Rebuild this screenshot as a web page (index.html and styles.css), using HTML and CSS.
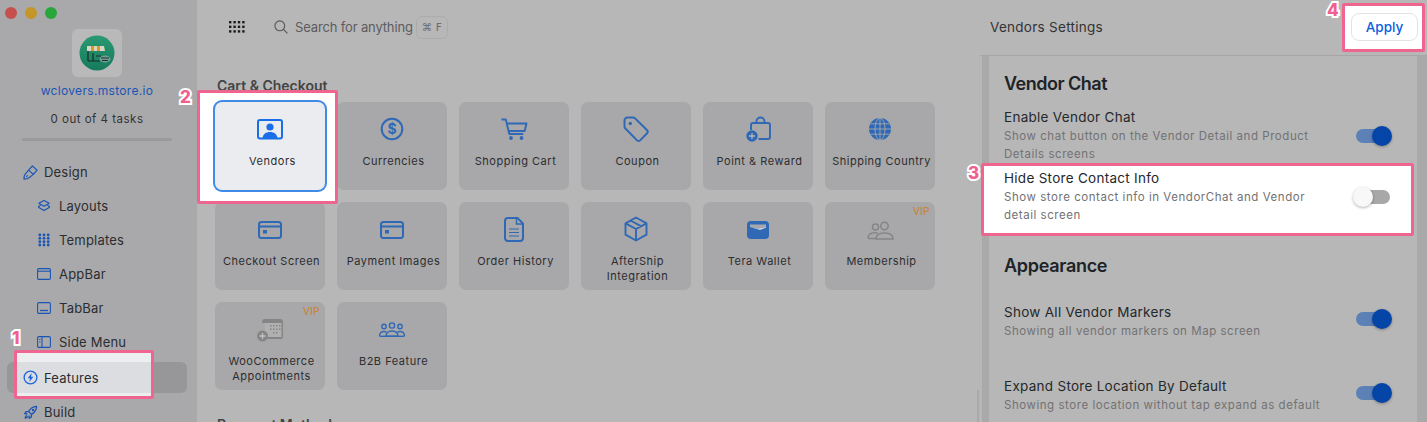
FILE: index.html
```html
<!DOCTYPE html>
<html lang="en">
<head>
<meta charset="utf-8">
<title>Vendors Settings</title>
<link rel="stylesheet" href="styles.css">
</head>
<body>
<div class="app">
  <aside class="sidebar">
    <div class="traffic"><i class="light red"></i><i class="light yellow"></i><i class="light green"></i></div>
    <div class="logo">
      <svg width="36" height="36" viewBox="0 0 36 36">
        <defs><linearGradient id="lg" x1="0" y1="0" x2="0" y2="1"><stop offset="0" stop-color="#2a9a72"/><stop offset="1" stop-color="#157a5c"/></linearGradient></defs>
        <circle cx="18" cy="18" r="17.5" fill="url(#lg)"/>
        <path d="M8 11h17l1 5H8z" fill="#d9d4c4"/>
        <path d="M12 11h3v5h-3zM18 11h3v5h-3z" fill="#d89a22"/>
        <path d="M9 16v10M14 18v8M9 26h12M17 21h5" stroke="#1c2a26" stroke-width="1.2" fill="none"/>
        <ellipse cx="26" cy="24" rx="5.5" ry="3.6" fill="#6f9e94"/>
        <path d="M22 23h8M23 25.500h6" stroke="#20302c" stroke-width="1"/>
      </svg>
    </div>
    <div class="site">wclovers.mstore.io</div>
    <div class="tasks">0 out of 4 tasks</div>
    <div class="progress"></div>
    <nav class="nav">
      <a class="nav-row">
        <svg class="nav-icon" viewBox="0 0 16 16"><path d="M10 1l5 4.500-4 4.500-5-4.500zM6 5.500L2.500 9.500C1.500 10.700 1 12.500 1 15c2.500 0 4.500-.5 5.500-1.500L11 10M3.500 12.500l1.500-1.500" fill="none" stroke="#1b55b4" stroke-width="1.300" stroke-linejoin="round"/></svg>
        <span>Design</span>
      </a>
      <a class="nav-row sub">
        <svg class="nav-icon" viewBox="0 0 14 14"><path d="M7 1.500l5.200 2.800L7 7.200 1.800 4.300zM3.500 6.300L1.800 7.500c-.4.300-.4.700 0 1L7 11.500l5.200-3c.4-.3.4-.7 0-1l-1.700-1.200" fill="none" stroke="#1b55b4" stroke-width="1.300" stroke-linejoin="round"/></svg>
        <span>Layouts</span>
      </a>
      <a class="nav-row sub">
        <svg class="nav-icon" viewBox="0 0 14 14"><g fill="#1b55b4"><circle cx="2.800" cy="2" r="1.400"/><circle cx="7" cy="2" r="1.400"/><circle cx="11.200" cy="2" r="1.400"/><circle cx="2.800" cy="5.300" r="1.400"/><circle cx="7" cy="5.300" r="1.400"/><circle cx="11.200" cy="5.300" r="1.400"/><circle cx="2.800" cy="8.700" r="1.400"/><circle cx="7" cy="8.700" r="1.400"/><circle cx="11.200" cy="8.700" r="1.400"/><circle cx="2.800" cy="12" r="1.400"/><circle cx="7" cy="12" r="1.400"/><circle cx="11.200" cy="12" r="1.400"/></g></svg>
        <span>Templates</span>
      </a>
      <a class="nav-row sub">
        <svg class="nav-icon" viewBox="0 0 14 14"><rect x=".6" y="1.600" width="12.800" height="10.800" rx="1.200" fill="none" stroke="#1b55b4" stroke-width="1.100"/><path d="M.6 4.200h12.800" stroke="#1b55b4" stroke-width="1.100"/></svg>
        <span>AppBar</span>
      </a>
      <a class="nav-row sub">
        <svg class="nav-icon" viewBox="0 0 14 14"><rect x=".6" y="1.600" width="12.800" height="10.800" rx="1.200" fill="none" stroke="#1b55b4" stroke-width="1.100"/><path d="M3 9.500h8" stroke="#1b55b4" stroke-width="1.300"/></svg>
        <span>TabBar</span>
      </a>
      <a class="nav-row sub">
        <svg class="nav-icon" viewBox="0 0 14 14"><rect x=".6" y="1.600" width="12.800" height="10.800" rx="1.200" fill="none" stroke="#1b55b4" stroke-width="1.100"/><path d="M5 1.600v10.800M2.200 4.500h1.300M2.200 7h1.300" stroke="#1b55b4" stroke-width="1.100"/></svg>
        <span>Side Menu</span>
      </a>
      <a class="nav-row active">
        <svg class="nav-icon" viewBox="0 0 16 16"><circle cx="8" cy="8" r="6.800" fill="none" stroke="#1d63e0" stroke-width="1.400"/><path d="M9.300 3.300L4.900 8.900h2.600L6.700 12.700l4.400-5.600H8.500z" fill="#1d63e0"/></svg>
        <span>Features</span>
      </a>
      <a class="nav-row build">
        <svg class="nav-icon" viewBox="0 0 16 16"><path d="M14.500 1.500c-4 .2-6.500 1.800-8.500 5.500L9 10c3.700-2 5.300-4.500 5.500-8.500zM6 7H3.300L1.800 9.300l3 .3M9 10v2.700l-2.300 1.500-.3-3M4 11c-1 .5-1.500 1.500-1.700 3 1.500-.2 2.500-.7 3-1.700" fill="none" stroke="#1b55b4" stroke-width="1.400" stroke-linejoin="round"/><circle cx="10.700" cy="5.300" r="1.300" fill="#1b55b4"/></svg>
        <span>Build</span>
      </a>
    </nav>
  </aside>

  <main class="main">
    <div class="topbar">
      <svg class="apps" width="16" height="12" viewBox="0 0 16 12"><g fill="#1c1c1c"><rect x="0" y="0" width="2.400" height="2.400"/><rect x="4.400" y="0" width="2.400" height="2.400"/><rect x="8.800" y="0" width="2.400" height="2.400"/><rect x="13.200" y="0" width="2.400" height="2.400"/><rect x="0" y="4.600" width="2.400" height="2.400"/><rect x="4.400" y="4.600" width="2.400" height="2.400"/><rect x="8.800" y="4.600" width="2.400" height="2.400"/><rect x="13.200" y="4.600" width="2.400" height="2.400"/><rect x="0" y="9.200" width="2.400" height="2.400"/><rect x="4.400" y="9.200" width="2.400" height="2.400"/><rect x="8.800" y="9.200" width="2.400" height="2.400"/><rect x="13.200" y="9.200" width="2.400" height="2.400"/></g></svg>
      <svg class="search-icon" width="14" height="14" viewBox="0 0 14 14"><circle cx="5.800" cy="5.800" r="4.900" fill="none" stroke="#555" stroke-width="1.100"/><path d="M9.400 9.400l4 4" stroke="#555" stroke-width="1.200"/></svg>
      <span class="search-text">Search for anything</span>
      <span class="kbd">⌘ F</span>
    </div>

    <section class="section">
      <h2 class="section-title">Cart &amp; Checkout</h2>
      <div class="grid">
        <div class="card selected">
          <svg class="card-icon" viewBox="0 0 28 28"><rect x="2" y="5" width="24" height="18.500" rx="2" fill="none" stroke="#1a6ee8" stroke-width="2"/><circle cx="14" cy="12" r="3.600" fill="#1a6ee8"/><path d="M6.500 23.500c.4-4.500 3.500-6.500 7.500-6.500s7.100 2 7.500 6.500z" fill="#1a6ee8"/></svg>
          <span class="card-label">Vendors</span>
        </div>
        <div class="card">
          <svg class="card-icon" viewBox="0 0 28 28"><circle cx="14" cy="14" r="10.300" fill="none" stroke="#2f68b5" stroke-width="2"/><text x="14" y="19" text-anchor="middle" class="dollar">$</text></svg>
          <span class="card-label">Currencies</span>
        </div>
        <div class="card">
          <svg class="card-icon" viewBox="0 0 28 28"><path d="M1.500 4.500h4.300l3.500 14.500h14M6.800 8.500H26.500l-1.800 7.500H8.500" fill="none" stroke="#2f68b5" stroke-width="1.900" stroke-linejoin="round"/><circle cx="11" cy="23" r="1.900" fill="#2f68b5"/><circle cx="21.500" cy="23" r="1.900" fill="#2f68b5"/></svg>
          <span class="card-label">Shopping Cart</span>
        </div>
        <div class="card">
          <svg class="card-icon" viewBox="0 0 28 28"><path d="M2.500 5.500a3 3 0 0 1 3-3h5.500a3 3 0 0 1 2.100.9L24.900 15a2.500 2.500 0 0 1 0 3.500l-6.600 6.600a2.500 2.500 0 0 1-3.500 0L3.400 13.500a3 3 0 0 1-.9-2.100z" fill="none" stroke="#2f68b5" stroke-width="2"/><circle cx="8.300" cy="8.500" r="1.700" fill="#2f68b5"/></svg>
          <span class="card-label">Coupon</span>
        </div>
        <div class="card">
          <svg class="card-icon" viewBox="0 0 28 28"><path d="M7 15V10a2 2 0 0 1 2-2h15a2 2 0 0 1 2 2v12a2 2 0 0 1-2 2H14.500M12.500 8V6.500a4 4 0 0 1 8 0V8" fill="none" stroke="#2f68b5" stroke-width="1.900"/><circle cx="8" cy="21" r="5.700" fill="#2f68b5"/><path d="M8 18v6M5 21h6" stroke="#b6b6b8" stroke-width="1.300"/></svg>
          <span class="card-label">Point &amp; Reward</span>
        </div>
        <div class="card">
          <svg class="card-icon" viewBox="0 0 28 28"><circle cx="14" cy="14" r="11" fill="#2f68b5"/><g fill="none" stroke="#a8a8aa" stroke-width=".9"><ellipse cx="14" cy="14" rx="5" ry="11"/><path d="M14 3v22M3 14h22M4.500 8.800h19M4.500 19.200h19"/></g></svg>
          <span class="card-label">Shipping Country</span>
        </div>
        <div class="card">
          <svg class="card-icon" viewBox="0 0 28 28"><rect x="3" y="7" width="22" height="16" rx="2.500" fill="none" stroke="#2f68b5" stroke-width="2"/><path d="M3 11.500h22" stroke="#2f68b5" stroke-width="2"/><rect x="7" y="15" width="4" height="3.500" fill="#2f68b5"/></svg>
          <span class="card-label">Checkout Screen</span>
        </div>
        <div class="card">
          <svg class="card-icon" viewBox="0 0 28 28"><rect x="3" y="7" width="22" height="16" rx="2.500" fill="none" stroke="#2f68b5" stroke-width="2"/><path d="M3 11.500h22" stroke="#2f68b5" stroke-width="2"/><rect x="7" y="15" width="4" height="3.500" fill="#2f68b5"/></svg>
          <span class="card-label">Payment Images</span>
        </div>
        <div class="card">
          <svg class="card-icon" viewBox="0 0 28 28"><path d="M8 3h9.500L23 8.500V23a3 3 0 0 1-3 3H8a3 3 0 0 1-3-3V6a3 3 0 0 1 3-3z" fill="none" stroke="#2f68b5" stroke-width="2" stroke-linejoin="round"/><path d="M16.500 3v6h6.500" fill="none" stroke="#2f68b5" stroke-width="1.500"/><path d="M9 14h10M9 17.500h10M9 21h10" stroke="#2f68b5" stroke-width="1.200"/></svg>
          <span class="card-label">Order History</span>
        </div>
        <div class="card">
          <svg class="card-icon" viewBox="0 0 28 28"><path d="M14 2.500L24.500 8.300V19.700L14 25.500L3.500 19.700V8.300zM3.500 8.300L14 14l10.500-5.700M14 14v11.500M8.500 5.500L19 11.200" fill="none" stroke="#2f68b5" stroke-width="1.900" stroke-linejoin="round"/></svg>
          <span class="card-label">AfterShip<br>Integration</span>
        </div>
        <div class="card">
          <svg class="card-icon" viewBox="0 0 28 28"><rect x="3" y="6" width="22" height="18" rx="4" fill="#2f68b5"/><path d="M6 9.500h16v2.500l-8 1.500-8-1.500z" fill="#a8a8aa"/><path d="M6 12l8 1.500 8-1.500v.8L16 15z" fill="#c9d2de"/></svg>
          <span class="card-label">Tera Wallet</span>
        </div>
        <div class="card">
          <span class="vip">VIP</span>
          <svg class="card-icon" viewBox="0 0 28 28"><g fill="none" stroke="#858585" stroke-width="1.500"><circle cx="9.500" cy="12" r="3"/><circle cx="18.500" cy="11" r="3.700"/><path d="M2 23c0-3.500 3-5.300 7-5.300 1 0 2 .1 2.800.4"/><path d="M10 24c0-4 3.500-6 8.500-6s8.500 2 8.500 6z"/><path d="M2 23.500h8"/></g></svg>
          <span class="card-label">Membership</span>
        </div>
        <div class="card">
          <span class="vip">VIP</span>
          <svg class="card-icon" viewBox="0 0 28 28"><path d="M6 7a3 3 0 0 1 3-3h15a3 3 0 0 1 3 3v15a2 2 0 0 1-2 2H10V8H6z" fill="#858585"/><rect x="9" y="8" width="16.500" height="14" fill="#b0b0b1"/><g fill="#858585"><rect x="14" y="10" width="1.500" height="1.500"/><rect x="17" y="10" width="1.500" height="1.500"/><rect x="20" y="10" width="1.500" height="1.500"/><rect x="23" y="10" width="1.500" height="1.500"/><rect x="14" y="13.500" width="1.500" height="1.500"/><rect x="17" y="13.500" width="1.500" height="1.500"/><rect x="20" y="13.500" width="1.500" height="1.500"/><rect x="23" y="13.500" width="1.500" height="1.500"/><rect x="17" y="17" width="1.500" height="1.500"/><rect x="20" y="17" width="1.500" height="1.500"/></g><circle cx="6.500" cy="21" r="5.500" fill="#858585"/><path d="M6.500 18v6M3.500 21h6" stroke="#c4c4c4" stroke-width="1.300"/></svg>
          <span class="card-label">WooCommerce<br>Appointments</span>
        </div>
        <div class="card">
          <svg class="card-icon" viewBox="0 0 28 28"><g fill="none" stroke="#2f68b5" stroke-width="1.400"><circle cx="6" cy="11.500" r="2.200"/><circle cx="14" cy="10.500" r="2.600"/><circle cx="22" cy="11.500" r="2.200"/><path d="M1.500 21c0-3 2-4.500 4.500-4.500 1 0 1.800.2 2.500.6"/><path d="M26.500 21c0-3-2-4.500-4.500-4.500-1 0-1.800.2-2.500.6"/><path d="M8 21.300c0-3.500 2.500-5.300 6-5.300s6 1.800 6 5.300z"/><path d="M1.500 21.300h25"/></g></svg>
          <span class="card-label">B2B Feature</span>
        </div>
      </div>
      <h2 class="section-title next">Payment Methods</h2>
    </section>
    <i class="scroll-thumb"></i>
  </main>

  <aside class="settings">
    <header class="settings-bar">
      <span class="settings-title">Vendors Settings</span>
      <button class="apply">Apply</button>
    </header>
    <div class="panel">
      <h3 class="group first">Vendor Chat</h3>
      <div class="row tall first-row">
        <div class="row-text"><div class="row-title">Enable Vendor Chat</div><div class="row-desc">Show chat button on the Vendor Detail and Product Details screens</div></div>
        <div class="toggle on"><i class="knob"></i></div>
      </div>
      <div class="row tall lifted">
        <div class="row-text"><div class="row-title">Hide Store Contact Info</div><div class="row-desc">Show store contact info in VendorChat and Vendor detail screen</div></div>
        <div class="toggle off"><i class="knob"></i></div>
      </div>
      <h3 class="group second">Appearance</h3>
      <div class="row short first-short">
        <div class="row-text"><div class="row-title">Show All Vendor Markers</div><div class="row-desc">Showing all vendor markers on Map screen</div></div>
        <div class="toggle on"><i class="knob"></i></div>
      </div>
      <div class="row short next-short">
        <div class="row-text"><div class="row-title">Expand Store Location By Default</div><div class="row-desc">Showing store location without tap expand as default</div></div>
        <div class="toggle on"><i class="knob"></i></div>
      </div>
    </div>
  </aside>

  <i class="spot spot-features"></i>
  <i class="spot spot-vendors"></i>
  <i class="spot spot-hide"></i>
  <i class="spot spot-apply"></i>
  <b class="step step-1">1</b>
  <b class="step step-2">2</b>
  <b class="step step-3">3</b>
  <b class="step step-4">4</b>
</div>
</body>
</html>
```
FILE: styles.css
```css
* { box-sizing: border-box; }
html, body { margin: 0; padding: 0; height: 100%; overflow: hidden; }
body { font-family: "Inter", "Liberation Sans", sans-serif; color: #2b2d30; background: #b7b7b7; }

.app { position: relative; display: flex; width: 1427px; height: 422px; overflow: hidden; }

/* Sidebar */
.sidebar { width: 197px; height: 422px; flex: none; background: #a9a9ab; display: flex; flex-direction: column; align-items: center; padding: 7px 3px 0 0; }
.sidebar > * { flex: none; }
.traffic { display: flex; gap: 8px; align-self: flex-start; padding-left: 5px; }
.light { display: block; width: 12px; height: 12px; border-radius: 50%; }
.red { background: #c5504e; }
.yellow { background: #c49529; }
.green { background: #27a63a; }
.logo { width: 50px; height: 48px; margin-top: 10px; border-radius: 6px; background: #b9b9ba; display: flex; align-items: center; justify-content: center; }
.site { margin-top: 5px; height: 18px; line-height: 18px; font-size: 12px; letter-spacing: .32px; color: #1a55b5; }
.tasks { margin-top: 10px; height: 18px; line-height: 18px; font-size: 11.500px; letter-spacing: .5px; color: #333; }
.progress { width: 150px; height: 3px; margin-top: 10px; border-radius: 2px; background: #9a9a9b; }
.nav { align-self: stretch; margin-top: 14px; padding: 0 7px; display: flex; flex-direction: column; }
.nav-row { display: flex; flex: none; align-items: center; gap: 6px; height: 34px; padding-left: 16px; font-size: 13px; letter-spacing: .2px; color: #2b2d30; }
.nav-row.sub { padding-left: 30px; gap: 8px; }
.nav-row.active { height: 31px; margin-top: 3px; background: #979799; border-radius: 6px; }
.nav-row.active > * { position: relative; z-index: 2; }
.nav-row.build { margin-top: 2px; }
.nav-icon { width: 14px; height: 14px; flex: none; }
.nav-row:not(.sub) .nav-icon { width: 15px; height: 15px; }

/* Main */
.main { position: relative; width: 783px; flex: none; background: #b7b7b7; }
.topbar { display: flex; align-items: center; height: 54px; padding-left: 32px; }
.apps { flex: none; }
.search-icon { margin-left: 29px; flex: none; }
.search-text { margin-left: 7px; font-size: 13px; letter-spacing: -.15px; color: #5c5c5e; }
.kbd { display: flex; align-items: center; justify-content: center; margin-left: 3px; width: 32px; height: 23px; border: 1px solid #acacac; border-radius: 6px; font-size: 10.500px; color: #6b6b6b; font-family: "DejaVu Sans", sans-serif; }
.section { padding-left: 18px; }
.section-title { margin: 22px 0 0; padding-left: 2px; height: 20px; line-height: 20px; font-size: 14px; font-weight: 600; color: #444; }
.section-title.next { margin-top: 25px; }
.grid { display: grid; grid-template-columns: repeat(6, 110px); grid-auto-rows: 88px; gap: 12px; margin-top: 6px; }
.card { position: relative; display: flex; flex-direction: column; align-items: center; padding: 13px 0 0 3px; background: #a8a8aa; border-radius: 7px; text-align: center; }
.card.selected { z-index: 2; background: #ebecef; box-shadow: 0 0 0 2px #3f8be8; padding-left: 5px; }
.card-icon { width: 28px; height: 28px; flex: none; margin-left: -3px; }
.selected .card-icon { margin-left: -5px; }
.card-label { margin-top: 11px; font-size: 11px; line-height: 15px; letter-spacing: .52px; color: #2c2d2f; }
.dollar { font-size: 14px; font-weight: 700; fill: #2f68b5; font-family: "Inter", sans-serif; }
.vip { position: absolute; top: 3px; right: 5.500px; font-size: 10px; line-height: 12px; letter-spacing: .2px; color: #c8811f; }
.scroll-thumb { position: absolute; right: 1px; top: 390px; width: 2px; height: 32px; background: #a9a9a9; }

/* Settings */
.settings { flex: 1; display: flex; flex-direction: column; min-width: 0; }
.settings-bar { display: flex; flex: none; align-items: center; justify-content: space-between; height: 56px; padding: 0 9px 1px 10px; border-bottom: 1px solid #a6a6a6; }
.settings-title { font-size: 13.500px; letter-spacing: .28px; color: #333; }
.apply { position: relative; z-index: 2; width: 67px; height: 28px; padding: 0; background: #fff; border: 1px solid #e3e3e3; border-radius: 8px; font: 500 13.500px "Inter", sans-serif; color: #0a5fe0; }
.panel { flex: 1; margin-left: 2px; padding: 0 27px 0 15px; background: #b7b7b7; border-left: 7px solid #a9a9a9; border-right: 10px solid #a9a9a9; }
.group { margin: 0; height: 24px; line-height: 24px; font-size: 18px; font-weight: 600; letter-spacing: -.5px; color: #1d2327; }
.group.first { margin-top: 16px; }
.group.second { margin-top: 30px; letter-spacing: -.3px; }
.row { display: flex; justify-content: space-between; align-items: flex-start; }
.row-text { width: 320px; }
.row-title { height: 19px; line-height: 19px; font-size: 13.500px; letter-spacing: .28px; color: #25282b; }
.row-desc { line-height: 18px; font-size: 11.500px; letter-spacing: .54px; color: #727274; }
.first-row { margin-top: 12px; }
.lifted { position: relative; z-index: 2; margin-top: 6px; }
.first-short { margin-top: 25px; }
.next-short { margin-top: 37px; }
.toggle { display: flex; align-items: center; flex: none; width: 34px; height: 14px; border-radius: 7px; }
.tall .toggle { margin-top: 21px; }
.short .toggle { margin-top: 9px; }
.toggle.on { background: #5b81b7; justify-content: flex-end; }
.toggle.off { background: #a8a8a8; justify-content: flex-start; }
.knob { display: block; width: 20px; height: 20px; flex: none; border-radius: 50%; }
.on .knob { background: #0645a8; margin-right: -2px; box-shadow: 0 1px 3px rgba(0,0,0,.3); }
.off .knob { background: #f8f8f8; margin-left: -3px; box-shadow: 0 1px 3px rgba(0,0,0,.3); }

/* Tutorial spotlights and step numbers laid over the page */
.spot { position: absolute; z-index: 1; display: block; border: 3px solid #ee6690; border-radius: 2px; background: #fff; }
.spot-features { left: 14px; top: 350px; width: 140px; height: 49px; background: linear-gradient(#edeef0 0 9px, #dcdde0 9px 40px, #edeef0 40px); }
.spot-vendors { left: 197px; top: 90px; width: 141px; height: 114px; }
.spot-hide { left: 981px; top: 163px; width: 433px; height: 73px; }
.spot-apply { left: 1342px; top: 3px; width: 83px; height: 49px; }
.step { position: absolute; z-index: 3; font-size: 17px; line-height: 18px; font-weight: 800; color: #f0608e; -webkit-text-stroke: 4px #fff; paint-order: stroke fill; }
.step-1 { left: 12px; top: 329px; }
.step-2 { left: 180px; top: 88px; }
.step-3 { left: 968px; top: 164px; }
.step-4 { left: 1327px; top: 1px; }
```
